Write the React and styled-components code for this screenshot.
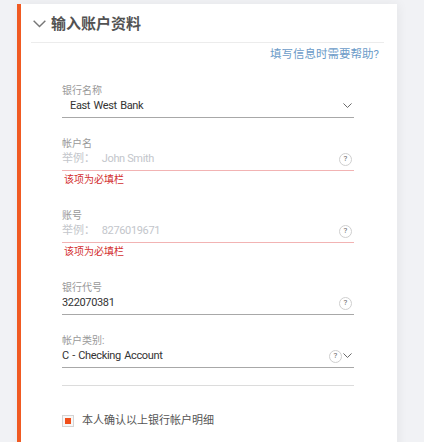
import React from "react";
import styled, { createGlobalStyle } from "styled-components";

const GlobalStyle = createGlobalStyle`
  html, body {
    margin: 0;
    padding: 0;
    background: #f1f2f5;
    font-family: "Roboto", "Noto Sans CJK SC", sans-serif;
  }
`;

const fields = [
  { label: "银行名称", value: "East West Bank", select: true },
  { label: "帐户名", placeholder: "举例：", example: "John Smith", help: true, error: "该项为必填栏" },
  { label: "账号", placeholder: "举例：", example: "8276019671", help: true, error: "该项为必填栏" },
  { label: "银行代号", value: "322070381", help: true },
  { label: "帐户类别:", value: "C - Checking Account", help: true, chevron: true },
];

function Chevron({ size = 10, color = "#666" }) {
  return (
    <svg width={size} height={size * 0.6} viewBox="0 0 10 6" fill="none">
      <path d="M0.5 0.5L5 5L9.5 0.5" stroke={color} strokeWidth="1.1" />
    </svg>
  );
}

function App() {
  return (
    <>
      <GlobalStyle />
      <Page>
        <Card>
          <Header>
            <Chevron size={13} color="#777" />
            <Title>输入账户资料</Title>
          </Header>
          <HelpLink>填写信息时需要帮助?</HelpLink>
          <Form>
            {fields.map((f) => (
              <Field key={f.label}>
                <Label>{f.label}</Label>
                <InputRow $error={!!f.error} $select={f.select}>
                  {f.value ? (
                    <Value>{f.value}</Value>
                  ) : (
                    <Placeholder>
                      {f.placeholder} <Latin>{f.example}</Latin>
                    </Placeholder>
                  )}
                  <Icons>
                    {f.help && <HelpIcon>?</HelpIcon>}
                    {(f.select || f.chevron) && <Chevron size={9} color="#666" />}
                  </Icons>
                </InputRow>
                {f.error && <ErrorText>{f.error}</ErrorText>}
              </Field>
            ))}
            <Separator />
            <CheckRow>
              <CheckBox>
                <CheckMark />
              </CheckBox>
              <CheckLabel>本人确认以上银行帐户明细</CheckLabel>
            </CheckRow>
          </Form>
        </Card>
      </Page>
    </>
  );
}

export default App;

const Page = styled.div`
  padding: 4px 0 0 17px;
  height: 438px;
  overflow: hidden;
`;

const Card = styled.div`
  width: 380px;
  min-height: 460px;
  background: #fff;
  border-left: 4px solid #f05a22;
  padding: 0 13px 0 10px;
  box-sizing: border-box;
  box-shadow: 2px 0 10px rgba(0, 0, 0, 0.05);
`;

const Header = styled.div`
  display: flex;
  align-items: center;
  gap: 5px;
  padding: 9px 0 7px 2px;
  border-bottom: 1px solid #ececec;
`;

const Title = styled.div`
  font-size: 15px;
  line-height: 22px;
  font-weight: 700;
  color: #525252;
`;

const HelpLink = styled.div`
  margin-top: 3px;
  padding-right: 5px;
  text-align: right;
  font-size: 11.5px;
  line-height: 16px;
  color: #6b9bc8;
`;

const Form = styled.div`
  padding: 22px 30px 0 31px;
`;

const Field = styled.div`
  display: flex;
  flex-direction: column;
  margin-bottom: 19px;
`;

const Label = styled.div`
  font-size: 10px;
  line-height: 14px;
  color: #999;
`;

const InputRow = styled.div`
  display: flex;
  align-items: flex-start;
  justify-content: space-between;
  height: 19px;
  padding-left: ${(p) => (p.$select ? "8px" : "0")};
  border-bottom: 1px solid ${(p) => (p.$error ? "#f2b3b3" : "#a8a8a8")};
`;

const Value = styled.div`
  font-size: 11px;
  line-height: 16px;
  letter-spacing: -0.35px;
  word-spacing: 1px;
  color: #333;
`;

const Placeholder = styled.div`
  font-size: 11px;
  line-height: 16px;
  color: #c3c6cb;
`;

const Latin = styled.span`
  margin-left: 4px;
  letter-spacing: -0.35px;
`;

const Icons = styled.div`
  display: flex;
  align-items: center;
  gap: 1px;
  height: 16px;
  padding-right: 2px;
`;

const HelpIcon = styled.span`
  width: 11px;
  height: 11px;
  border: 1px solid #cfcfcf;
  border-radius: 50%;
  display: flex;
  align-items: center;
  justify-content: center;
  font-size: 8px;
  line-height: 1;
  color: #666;
`;

const ErrorText = styled.div`
  margin: 2px 0 3px 2px;
  font-size: 10px;
  line-height: 14px;
  color: #d32f2f;
`;

const Separator = styled.div`
  margin-top: -2px;
  border-top: 1px solid #dcdcdc;
`;

const CheckRow = styled.div`
  display: flex;
  align-items: center;
  gap: 8px;
  margin-top: 27px;
`;

const CheckBox = styled.div`
  width: 10px;
  height: 10px;
  border: 1px solid #d4d4d4;
  background: #f7f7f7;
  display: flex;
  align-items: center;
  justify-content: center;
`;

const CheckMark = styled.div`
  width: 6px;
  height: 6px;
  background: #f04e1a;
`;

const CheckLabel = styled.div`
  font-size: 11px;
  line-height: 16px;
  color: #555;
`;
